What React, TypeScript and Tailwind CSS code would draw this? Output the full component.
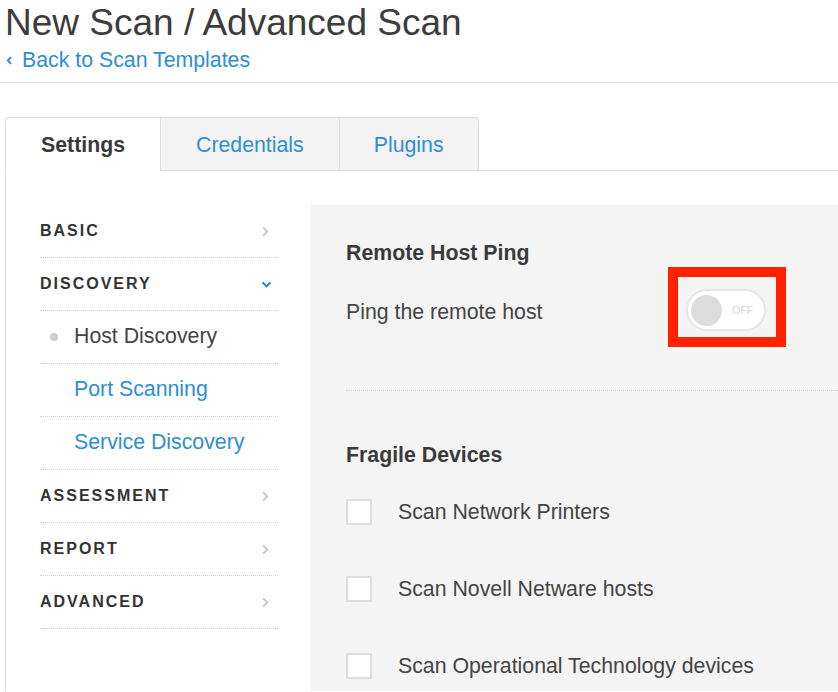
import React from 'react';

const ChevronRight: React.FC<{className?: string}> = ({className}) => (
    <svg viewBox="0 0 8 12" className={className} fill="none" stroke="currentColor" strokeWidth="1.8">
        <path d="M1.5 1.5 6 6l-4.5 4.5" />
    </svg>
);

const ChevronDown: React.FC<{className?: string}> = ({className}) => (
    <svg viewBox="0 0 12 8" className={className} fill="none" stroke="currentColor" strokeWidth="2.4">
        <path d="M1.5 1.5 6 6l4.5-4.5" />
    </svg>
);

const ChevronLeft: React.FC<{className?: string}> = ({className}) => (
    <svg viewBox="0 0 8 12" className={className} fill="none" stroke="currentColor" strokeWidth="2.6">
        <path d="M6 1.5 1.8 6 6 10.5" />
    </svg>
);

const sections = [
    { label: 'BASIC' },
    { label: 'DISCOVERY', open: true, items: ['Host Discovery', 'Port Scanning', 'Service Discovery'] },
    { label: 'ASSESSMENT' },
    { label: 'REPORT' },
    { label: 'ADVANCED' },
];

const fragile = ['Scan Network Printers', 'Scan Novell Netware hosts', 'Scan Operational Technology devices'];

const App: React.FC = () => {
    return (
        <div className="w-[838px] h-[692px] overflow-hidden bg-white font-['Liberation_Sans',Arial,sans-serif] text-[#444]">
            {/* Page header */}
            <div className="border-b border-[#e2e2e2] pb-[10px]">
                <h1 className="ml-[5px] mt-[3px] text-[37px] leading-[40px] text-[#3c3c3c]">New Scan / Advanced Scan</h1>
                <a className="ml-[6px] mt-[5px] flex items-center gap-[9px] text-[21.3px] leading-[24px] text-[#2f8ed3]">
                    <ChevronLeft className="w-[7px] h-[9px]" />
                    Back to Scan Templates
                </a>
            </div>

            {/* Tabs */}
            <div className="ml-[5px] mt-[34px]">
                <div className="flex items-end border-b border-[#dcdcdc] h-[54px]">
                    <div className="h-[54px] -mb-px px-[35px] pt-[3px] flex items-center border border-[#dcdcdc] border-b-white bg-white rounded-tl-[4px] font-bold text-[21.3px] text-[#3a3a3a]">
                        Settings
                    </div>
                    <div className="h-[54px] -mb-px px-[35px] pt-[3px] flex items-center border border-l-0 border-[#dcdcdc] bg-[#f3f3f3] text-[21.3px] text-[#2f8ed3]">
                        Credentials
                    </div>
                    <div className="h-[54px] -mb-px px-[34px] pt-[3px] flex items-center border border-l-0 border-[#dcdcdc] bg-[#f3f3f3] rounded-tr-[4px] text-[21.3px] text-[#2f8ed3]">
                        Plugins
                    </div>
                </div>

                {/* Body */}
                <div className="border-l border-[#dcdcdc] pt-[34px] flex h-[520px]">
                    {/* Sidebar */}
                    <div className="ml-[34px] w-[238px] shrink-0">
                        {sections.map((s) => (
                            <div key={s.label}>
                                <div className="h-[53px] border-b border-dotted border-[#cfcfcf] flex items-center justify-between">
                                    <span className="text-[16px] font-bold tracking-[2px] text-[#333]">{s.label}</span>
                                    {s.open ? (
                                        <ChevronDown className="w-[11px] h-[7px] mr-[6px] text-[#2596b3]" />
                                    ) : (
                                        <ChevronRight className="w-[7px] h-[11px] mr-[9px] text-[#bdbdbd]" />
                                    )}
                                </div>
                                {s.items?.map((item, i) => (
                                    <div key={item} className="h-[53px] border-b border-dotted border-[#cfcfcf] flex items-center text-[21.3px]">
                                        {i === 0 ? (
                                            <>
                                                <span className="ml-[10px] w-[8px] h-[8px] rounded-full bg-[#cccccc]" />
                                                <span className="ml-[16px] text-[#444]">{item}</span>
                                            </>
                                        ) : (
                                            <span className="ml-[34px] text-[#2f8ed3]">{item}</span>
                                        )}
                                    </div>
                                ))}
                            </div>
                        ))}
                    </div>

                    {/* Settings panel */}
                    <div className="ml-[33px] flex-1 bg-[#f4f4f4] pl-[35px] pt-[36px]">
                        <h2 className="text-[21.3px] leading-[24px] font-bold text-[#3a3a3a]">Remote Host Ping</h2>
                        <div className="mt-[2px] flex items-start">
                            <div className="w-[322px] pt-[33px] text-[21.3px] leading-[24px]">Ping the remote host</div>
                            <div className="border-[10px] border-[#ff2200] pl-[8px] pr-[10px] pt-[12px] pb-[6px]">
                                <div className="relative w-[80px] h-[42px] rounded-full bg-white border-2 border-[#e6e6e6] flex items-center">
                                    <span className="ml-[3px] w-[31px] h-[31px] rounded-full bg-[#dcdcdc]" />
                                    <span className="ml-[10px] text-[10.7px] text-[#d6d6d6]">OFF</span>
                                </div>
                            </div>
                        </div>
                        <div className="mt-[43px] border-b border-dotted border-[#cfcfcf]" />

                        <h2 className="mt-[52px] text-[21.3px] leading-[24px] font-bold text-[#3a3a3a]">Fragile Devices</h2>
                        <div className="mt-[32px] flex flex-col gap-[51px]">
                            {fragile.map((f) => (
                                <label key={f} className="flex items-center h-[26px]">
                                    <span className="w-[26px] h-[26px] bg-white border-2 border-[#dddddd] shrink-0" />
                                    <span className="ml-[26px] text-[21.3px] leading-[24px]">{f}</span>
                                </label>
                            ))}
                        </div>
                    </div>
                </div>
            </div>
        </div>
    );
};

export default App;
